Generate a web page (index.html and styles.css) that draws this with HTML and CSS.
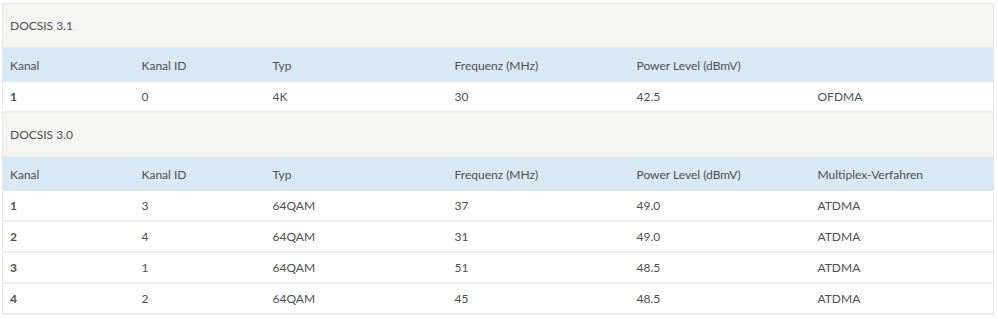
FILE: index.html
```html
<!DOCTYPE html>
<html lang="de">
<head>
<meta charset="utf-8">
<link rel="stylesheet" href="styles.css">
</head>
<body>
<table class="ch-table">
  <colgroup>
    <col class="c1"><col class="c2"><col class="c3"><col class="c4"><col class="c5"><col class="c6">
  </colgroup>
  <tbody>
    <tr class="section"><td colspan="6">DOCSIS 3.1</td></tr>
    <tr class="head"><td>Kanal</td><td>Kanal ID</td><td>Typ</td><td>Frequenz (MHz)</td><td>Power Level (dBmV)</td><td></td></tr>
    <tr class="row"><td class="num">1</td><td>0</td><td>4K</td><td>30</td><td>42.5</td><td>OFDMA</td></tr>
    <tr class="section"><td colspan="6">DOCSIS 3.0</td></tr>
    <tr class="head"><td>Kanal</td><td>Kanal ID</td><td>Typ</td><td>Frequenz (MHz)</td><td>Power Level (dBmV)</td><td>Multiplex-Verfahren</td></tr>
    <tr class="row"><td class="num">1</td><td>3</td><td>64QAM</td><td>37</td><td>49.0</td><td>ATDMA</td></tr>
    <tr class="row"><td class="num">2</td><td>4</td><td>64QAM</td><td>31</td><td>49.0</td><td>ATDMA</td></tr>
    <tr class="row"><td class="num">3</td><td>1</td><td>64QAM</td><td>51</td><td>48.5</td><td>ATDMA</td></tr>
    <tr class="row"><td class="num">4</td><td>2</td><td>64QAM</td><td>45</td><td>48.5</td><td>ATDMA</td></tr>
  </tbody>
</table>
</body>
</html>
```
FILE: styles.css
```css
html, body {
  margin: 0;
  padding: 0;
  background: #ffffff;
}
body {
  padding: 3px 5px 0 2px;
  font-family: Lato, "Open Sans", sans-serif;
  font-size: 12px;
  color: #4f4f4f;
}
.ch-table {
  width: 991px;
  border-collapse: collapse;
  table-layout: fixed;
  border: 1px solid #e6e6e6;
}
.c1 { width: 132px; }
.c2 { width: 131px; }
.c3 { width: 182px; }
.c4 { width: 182px; }
.c5 { width: 181px; }
.c6 { width: 183px; }
.ch-table td {
  padding: 0 0 0 7px;
  white-space: nowrap;
}
.section td {
  background: #f5f5f3;
  height: 43px;
  border-bottom: 1px solid #ececec;
}
.head td {
  background: #d9e8f5;
  height: 34px;
}
.row td {
  background: #ffffff;
  height: 29px;
  border-bottom: 2px solid #eeeeee;
}
.row td.num {
  font-weight: 700;
}
```
